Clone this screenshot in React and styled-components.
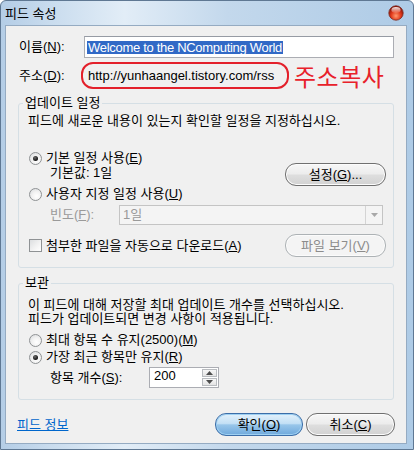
import React from 'react';
import styled, { createGlobalStyle, css } from 'styled-components';

const FONT = `"Liberation Sans", "Noto Sans CJK KR", sans-serif`;

const GlobalStyle = createGlobalStyle`
  html, body {
    margin: 0;
    padding: 0;
    background: #ffffff;
  }
  * { box-sizing: border-box; }
`;

const Window = styled.div`
  width: 414px;
  height: 450px;
  display: flex;
  flex-direction: column;
  padding: 0 6px 5px 4px;
  border: 1px solid #5f7893;
  border-radius: 6px 6px 0 0;
  background: linear-gradient(90deg, #b4cde6 0%, #c9dcee 12%, #e2edf7 30%, #c3d8ec 55%, #aecbe6 100%);
  font-family: ${FONT};
  font-size: 13px;
  color: #000;
`;

const TitleBar = styled.div`
  height: 24px;
  display: flex;
  align-items: center;
  justify-content: space-between;
  padding: 0 3px 0 0;
`;

const Title = styled.span`
  font-size: 13px;
  line-height: 14px;
  padding-top: 1px;
`;

const Client = styled.div`
  flex: 1;
  display: flex;
  flex-direction: column;
  padding: 10px 11px 0 10px;
  background: #f0f0f0;
  border: 1px solid #95abc2;
`;

const FieldRow = styled.div`
  display: flex;
  align-items: center;
  height: ${p => p.$h || 22}px;
  margin-bottom: ${p => p.$mb || 0}px;
`;

const Label = styled.span`
  width: 68px;
  flex: none;
  padding-left: 3px;
  line-height: 14px;
  color: ${p => (p.$disabled ? '#9a9a9a' : '#000')};
`;

const TextBox = styled.div`
  flex: 1;
  height: 22px;
  margin-right: 1px;
  display: flex;
  align-items: center;
  padding-left: 2px;
  background: #fff;
  border: 1px solid #abadb3;
  border-top-color: #969ba4;
`;

const Selected = styled.span`
  background: #3169c6;
  color: #fff;
  line-height: 13px;
  padding: 0 1px;
  letter-spacing: -0.3px;
`;

const Address = styled.span`
  width: 208px;
  height: 27px;
  flex: none;
  margin-left: -3px;
  display: flex;
  align-items: center;
  padding: 0 6px 0 5px;
  border: 2px solid #e3202b;
  border-radius: 12px;
  line-height: 14px;
  white-space: nowrap;
`;

const Annotation = styled.span`
  margin-left: 5px;
  font-family: "Noto Sans CJK KR", sans-serif;
  font-size: 24px;
  line-height: 26px;
  color: #e8212b;
  letter-spacing: 0.5px;
`;

const Group = styled.fieldset`
  margin: ${p => p.$mt || 0}px 1px 0 2px;
  padding: 2px 7px ${p => p.$pb || 10}px 9px;
  border: 1px solid #d5dfe5;
  border-radius: 3px;
  min-width: 0;
`;

const Legend = styled.legend`
  padding: 0 2px;
  margin-left: -5px;
  line-height: 16px;
`;

const Desc = styled.div`
  line-height: ${p => p.$lh || 16}px;
  margin-top: ${p => p.$mt || 0}px;
  white-space: nowrap;
`;

const OptionRow = styled.div`
  display: flex;
  align-items: center;
  height: 16px;
  margin-top: ${p => p.$mt || 0}px;
  gap: 4px;
  padding-left: 1px;
  line-height: 14px;
`;

const SplitRow = styled.div`
  display: flex;
  align-items: center;
  justify-content: space-between;
  height: ${p => p.$h || 23}px;
  margin-top: ${p => p.$mt || 0}px;
`;

const Indent = styled.span`
  padding-left: 22px;
  line-height: 14px;
  padding-bottom: ${p => p.$pb || 0}px;
  color: ${p => (p.$disabled ? '#9a9a9a' : '#000')};
  width: ${p => (p.$w ? `${p.$w}px` : 'auto')};
  flex: none;
`;

const Radio = styled.span`
  width: 13px;
  height: 13px;
  flex: none;
  border-radius: 50%;
  border: 1px solid #8f9294;
  background: radial-gradient(circle at 60% 65%, #ffffff 0%, #f2f2f2 45%, #d4d7da 100%);
  display: flex;
  align-items: center;
  justify-content: center;
  ${p => p.$checked && css`
    &::after {
      content: '';
      width: 5px;
      height: 5px;
      border-radius: 50%;
      background: radial-gradient(circle at 40% 35%, #6b6b6b, #111 70%);
    }
  `}
`;

const Check = styled.span`
  width: 13px;
  height: 13px;
  flex: none;
  border: 1px solid #8f9294;
  background: linear-gradient(135deg, #dcdee0 0%, #f4f4f4 60%, #ffffff 100%);
`;

const CheckLabel = styled.span`
  display: flex;
  align-items: center;
  gap: 4px;
  padding-left: 1px;
  line-height: 14px;
`;

const Button = styled.button`
  width: ${p => p.$w || 101}px;
  height: 23px;
  flex: none;
  padding: 0;
  font-family: ${FONT};
  font-size: 13px;
  line-height: 14px;
  color: #000;
  border: 1px solid #707070;
  border-radius: 11px;
  background: linear-gradient(#f7f7f7 0%, #ececec 48%, #dedede 52%, #d2d2d2 100%);
  box-shadow: inset 0 0 0 1px #fcfcfc;
  ${p => p.disabled && css`
    color: #8c8c8c;
    border-color: #adb2b5;
    background: #f4f4f4;
    box-shadow: inset 0 0 0 1px #fbfbfb;
  `}
  ${p => p.$primary && css`
    border-color: #3c6ea8;
    background: linear-gradient(#e3f1fb 0%, #c3e0f5 45%, #98c6ea 52%, #6fa9dc 100%);
    box-shadow: inset 0 0 0 1px #9ed0f2;
  `}
`;

const Select = styled.div`
  width: 268px;
  height: 20px;
  margin-right: 3px;
  display: flex;
  align-items: center;
  justify-content: space-between;
  padding-left: 3px;
  border: 1px solid #c4c4c4;
  background: #f4f4f4;
  color: #9a9a9a;
  line-height: 14px;
`;

const SelectArrow = styled.span`
  width: 17px;
  height: 100%;
  display: flex;
  align-items: center;
  justify-content: center;
  border-left: 1px solid #d4d4d4;
`;

const SpinRow = styled.div`
  display: flex;
  align-items: center;
  height: 21px;
  margin-top: 2px;
`;

const SpinBox = styled.div`
  width: 70px;
  height: 21px;
  display: flex;
  justify-content: space-between;
  padding: 1px 1px 1px 4px;
  background: #fff;
  border: 1px solid #abadb3;
  line-height: 14px;
`;

const SpinButtons = styled.div`
  width: 15px;
  display: flex;
  flex-direction: column;
  gap: 1px;
`;

const SpinButton = styled.span`
  flex: 1;
  display: flex;
  align-items: center;
  justify-content: center;
  border: 1px solid #b9bcc0;
  background: linear-gradient(#f7f7f7, #e4e4e4);
`;

const Footer = styled.div`
  display: flex;
  align-items: center;
  justify-content: space-between;
  margin-top: 13px;
  padding-left: 1px;
`;

const Link = styled.a`
  color: #0066cc;
  text-decoration: underline;
  line-height: 14px;
`;

const FooterButtons = styled.div`
  display: flex;
  gap: 3px;
`;

const Key = styled.u`
  text-decoration: underline;
`;

const CloseIcon = () => (
  <svg width="16" height="16" viewBox="0 0 16 16">
    <defs>
      <radialGradient id="cg" cx="50%" cy="70%" r="60%">
        <stop offset="0%" stopColor="#ff9a70" />
        <stop offset="55%" stopColor="#e23a1c" />
        <stop offset="100%" stopColor="#8e1408" />
      </radialGradient>
      <linearGradient id="cs" x1="0" y1="0" x2="0" y2="1">
        <stop offset="0%" stopColor="#ffffff" stopOpacity="0.9" />
        <stop offset="100%" stopColor="#ffffff" stopOpacity="0.1" />
      </linearGradient>
    </defs>
    <circle cx="8" cy="8" r="7.2" fill="url(#cg)" stroke="#7a2a20" strokeWidth="0.8" />
    <ellipse cx="8" cy="5" rx="4.6" ry="3" fill="url(#cs)" />
  </svg>
);

const Tri = ({ up, color = '#4d4d4d' }) => (
  <svg width="7" height="4" viewBox="0 0 7 4">
    <path d={up ? 'M0 4 L3.5 0 L7 4 Z' : 'M0 0 L7 0 L3.5 4 Z'} fill={color} />
  </svg>
);

const App = () => (
  <>
    <GlobalStyle />
    <Window>
      <TitleBar>
        <Title>피드 속성</Title>
        <CloseIcon />
      </TitleBar>
      <Client>
        <FieldRow $mb={4}>
          <Label>이름(<Key>N</Key>):</Label>
          <TextBox>
            <Selected>Welcome to the NComputing World</Selected>
          </TextBox>
        </FieldRow>
        <FieldRow $h={27}>
          <Label>주소(<Key>D</Key>):</Label>
          <Address>http://yunhaangel.tistory.com/rss</Address>
          <Annotation>주소복사</Annotation>
        </FieldRow>

        <Group $mt={6}>
          <Legend>업데이트 일정</Legend>
          <Desc>피드에 새로운 내용이 있는지 확인할 일정을 지정하십시오.</Desc>
          <OptionRow $mt={21}>
            <Radio $checked />
            <span>기본 일정 사용(<Key>E</Key>)</span>
          </OptionRow>
          <SplitRow $mt={-3}>
            <Indent $pb={4}>기본값: 1일</Indent>
            <Button>설정(<Key>G</Key>)...</Button>
          </SplitRow>
          <OptionRow>
            <Radio />
            <span>사용자 지정 일정 사용(<Key>U</Key>)</span>
          </OptionRow>
          <SplitRow $h={22} $mt={2}>
            <Indent $disabled $w={91}>빈도(<Key>F</Key>):</Indent>
            <Select>
              1일
              <SelectArrow>
                <Tri color="#a8a8a8" />
              </SelectArrow>
            </Select>
          </SplitRow>
          <SplitRow $mt={8}>
            <CheckLabel>
              <Check />
              <span>첨부한 파일을 자동으로 다운로드(<Key>A</Key>)</span>
            </CheckLabel>
            <Button disabled>파일 보기(<Key>V</Key>)</Button>
          </SplitRow>
        </Group>

        <Group $mt={7} $pb={11}>
          <Legend>보관</Legend>
          <Desc $lh={14} $mt={5}>
            이 피드에 대해 저장할 최대 업데이트 개수를 선택하십시오.
            <br />
            피드가 업데이트되면 변경 사항이 적용됩니다.
          </Desc>
          <OptionRow $mt={6}>
            <Radio />
            <span>최대 항목 수 유지(2500)(<Key>M</Key>)</span>
          </OptionRow>
          <OptionRow $mt={1}>
            <Radio $checked />
            <span>가장 최근 항목만 유지(<Key>R</Key>)</span>
          </OptionRow>
          <SpinRow>
            <Indent $w={121}>항목 개수(<Key>S</Key>):</Indent>
            <SpinBox>
              200
              <SpinButtons>
                <SpinButton><Tri up /></SpinButton>
                <SpinButton><Tri /></SpinButton>
              </SpinButtons>
            </SpinBox>
          </SpinRow>
        </Group>

        <Footer>
          <Link href="#">피드 정보</Link>
          <FooterButtons>
            <Button $primary $w={88}>확인(<Key>O</Key>)</Button>
            <Button $w={89}>취소(<Key>C</Key>)</Button>
          </FooterButtons>
        </Footer>
      </Client>
    </Window>
  </>
);

export default App;
